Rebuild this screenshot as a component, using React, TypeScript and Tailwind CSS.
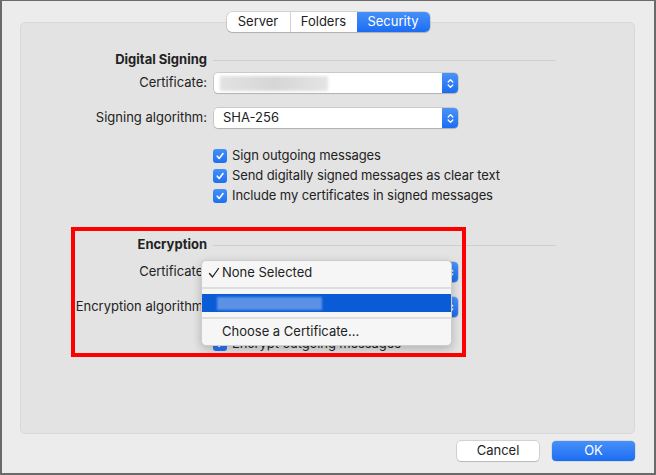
import React from 'react';

// Up/down chevrons inside a popup button
function Arrows() {
  return (
    <svg width="7" height="11" viewBox="0 0 7 11">
      <path
        d="M1.2 4 L3.5 1.6 L5.8 4 M1.2 7 L3.5 9.4 L5.8 7"
        stroke="white"
        strokeWidth="1.3"
        fill="none"
        strokeLinecap="round"
        strokeLinejoin="round"
      />
    </svg>
  );
}

function Popup({ children }: { children?: React.ReactNode }) {
  return (
    <div className="relative flex w-[244px] h-[20px] rounded-[4px] bg-white shadow-[0_0_0_0.5px_rgba(0,0,0,0.22),0_1px_1px_rgba(0,0,0,0.12)]">
      <div className="flex-1 flex items-center pl-[9px] text-[13px] text-[#222]">{children}</div>
      <div className="w-[16px] h-full rounded-r-[4px] bg-linear-to-b from-[#4a93f8] to-[#1b6cf2] flex items-center justify-center">
        <Arrows />
      </div>
    </div>
  );
}

function Checkbox({ label }: { label: string }) {
  return (
    <div className="flex items-center h-[20px] -ml-px gap-[5px]">
      <div className="w-[14px] h-[14px] rounded-[3px] bg-linear-to-b from-[#4391f8] to-[#1f6ff3] flex items-center justify-center">
        <svg width="10" height="10" viewBox="0 0 10 10">
          <path d="M2.2 5.2 L4.2 7.4 L8 2.6" stroke="white" strokeWidth="1.6" fill="none" strokeLinecap="round" strokeLinejoin="round" />
        </svg>
      </div>
      <span className="text-[13px] text-[#222] tracking-[-0.1px]">{label}</span>
    </div>
  );
}

function Row({ label, bold, children }: { label: string; bold?: boolean; children?: React.ReactNode }) {
  return (
    <div className="flex items-center">
      <div className={`w-[167px] text-right text-[13px] text-[#222] whitespace-nowrap ${bold ? 'font-bold' : ''}`}>{label}</div>
      <div className="ml-[7px] flex items-center">{children}</div>
    </div>
  );
}

export default function App() {
  return (
    <div className="relative w-[656px] h-[475px] bg-[#ececec] border-t border-l-2 border-r-2 border-b-2 border-[#6a6a6a] font-['Inter','Noto_Sans',sans-serif] overflow-hidden">
      {/* Tabs */}
      <div className="relative z-10 flex justify-center pt-[11px]">
        <div className="flex h-[20px] rounded-[5px] bg-white text-[13px] text-[#222] shadow-[0_0_0_0.5px_rgba(0,0,0,0.22),0_1px_1px_rgba(0,0,0,0.12)]">
          <div className="w-[64px] flex items-center justify-center border-r border-[#d4d4d4]">Server</div>
          <div className="w-[66px] flex items-center justify-center">Folders</div>
          <div className="w-[73px] flex items-center justify-center rounded-r-[5px] bg-linear-to-b from-[#4690f8] to-[#1b6cf3] text-white">Security</div>
        </div>
      </div>

      {/* Group box */}
      <div className="-mt-[10px] ml-[18px] mr-[19px] h-[412px] rounded-[5px] bg-[#e3e3e3] border border-[#d9d9d9] pl-[19px] pt-[29px] flex flex-col">
        <div className="h-[16px] flex items-center">
          <Row label="Digital Signing" bold>
            <div className="-ml-px w-[343px] h-px bg-[#cfcfcf]" />
          </Row>
        </div>
        <div className="mt-[5px]">
          <Row label="Certificate:">
            <Popup>
              <div className="ml-[-3px] w-[108px] h-[15px] bg-linear-to-r from-[#e2e2e2] via-[#d6d6d6] to-[#e4e4e4] blur-[1.5px]" />
            </Popup>
          </Row>
        </div>
        <div className="mt-[15px]">
          <Row label="Signing algorithm:">
            <Popup>SHA-256</Popup>
          </Row>
        </div>
        <div className="mt-[18px] ml-[174px] flex flex-col">
          <Checkbox label="Sign outgoing messages" />
          <Checkbox label="Send digitally signed messages as clear text" />
          <Checkbox label="Include my certificates in signed messages" />
        </div>
        <div className="mt-[31px] h-[16px] flex items-center">
          <Row label="Encryption" bold>
            <div className="-ml-px w-[343px] h-px bg-[#cfcfcf]" />
          </Row>
        </div>
        <div className="mt-[9px]">
          <Row label="Certificate:">
            <Popup />
          </Row>
        </div>
        <div className="mt-[15px]">
          <Row label="Encryption algorithm:">
            <Popup>AES-256</Popup>
          </Row>
        </div>
        <div className="mt-[17px] ml-[174px]">
          <Checkbox label="Encrypt outgoing messages" />
        </div>
      </div>

      {/* Buttons */}
      <div className="flex justify-end gap-[13px] mt-[7px] mr-[19px]">
        <div className="w-[82px] h-[20px] rounded-[4px] bg-white flex items-center justify-center text-[13px] text-[#222] shadow-[0_0_0_0.5px_rgba(0,0,0,0.22),0_1px_1px_rgba(0,0,0,0.12)]">
          Cancel
        </div>
        <div className="w-[83px] h-[20px] rounded-[4px] bg-linear-to-b from-[#4690f8] to-[#1b6cf3] flex items-center justify-center text-[13px] text-white shadow-[0_0_0_0.5px_rgba(0,0,0,0.15)]">
          OK
        </div>
      </div>

      {/* Open popup menu */}
      <div className="absolute left-[199px] top-[259px] w-[251px] h-[86px] rounded-[5px] bg-[#f6f6f6] border border-[#cdcdcd] shadow-[0_3px_10px_rgba(0,0,0,0.22)] pt-[2px] text-[13px] text-[#222] overflow-hidden">
        <div className="h-[19px] flex items-center pl-[6px]">
          <svg width="14" height="12" viewBox="0 0 14 12" className="shrink-0">
            <path d="M1.5 6.5 L4.5 10 L10.5 1.5" stroke="#222" strokeWidth="1.3" fill="none" strokeLinecap="round" strokeLinejoin="round" />
          </svg>
          <span>None Selected</span>
        </div>
        <div className="h-[12px] flex items-center">
          <div className="w-full h-[2px] bg-[#dedede]" />
        </div>
        <div className="h-[18px] bg-[#0a5cd6] pt-[3px] pl-[15px]">
          <div className="w-[105px] h-[13px] bg-[#5b92e6] blur-[1px]" />
        </div>
        <div className="h-[11px] flex items-center">
          <div className="w-full h-[2px] bg-[#dedede]" />
        </div>
        <div className="h-[18px] flex items-center pl-[20px]">Choose a Certificate...</div>
      </div>

      {/* Annotation box */}
      <div className="absolute left-[69px] top-[226px] w-[395px] h-[130px] border-4 border-[#ff0000]" />
    </div>
  );
}
